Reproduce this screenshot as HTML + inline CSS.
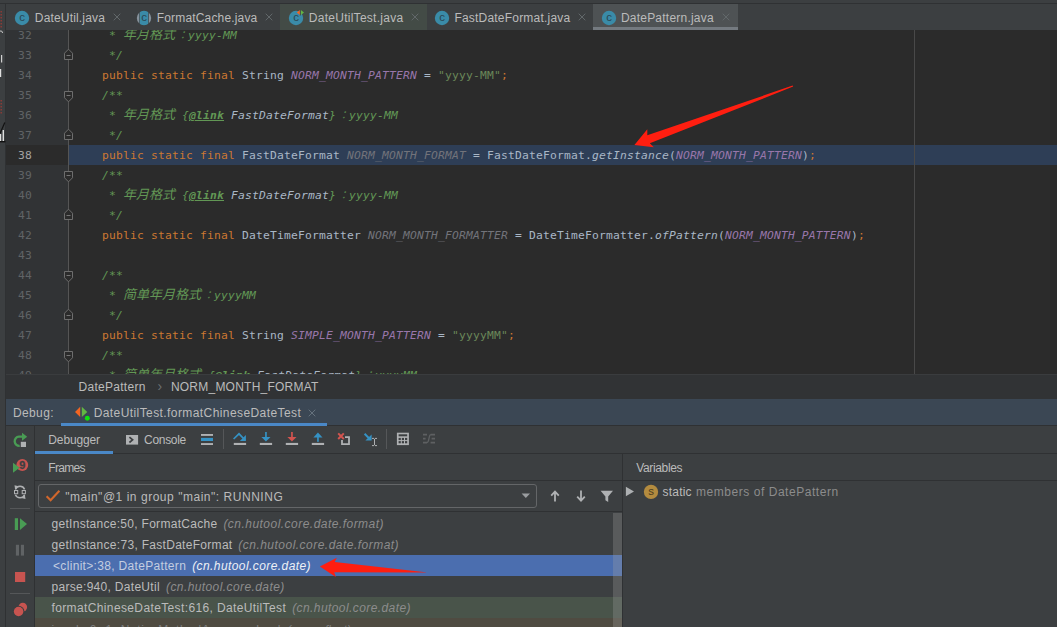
<!DOCTYPE html>
<html lang="zh"><head><meta charset="utf-8"><title>DatePattern.java - Debug</title>
<style>
*{box-sizing:border-box;margin:0;padding:0}
html,body{width:1057px;height:627px;overflow:hidden;background:#3c3f41}
body{position:relative;font-family:"Liberation Sans","Noto Sans CJK SC",sans-serif;font-size:12px;color:#bbbbbb}
.abs{position:absolute;display:block}
.ui{position:absolute;white-space:pre;line-height:16px;height:16px}
#topstrip{position:absolute;left:0;top:0;width:1057px;height:4px;background:#3c3f41;border-bottom:1px solid #2f3133}
#leftstrip{position:absolute;left:0;top:4px;width:6px;height:623px;background:#3c3f41;border-right:1px solid #2f3133}
#tabbar{position:absolute;left:6px;top:4px;width:1051px;height:26px;background:#3c3f41}
.tab{position:absolute;top:4px;height:26px}
.ttest{background:#434b46}
.tsel{background:#4e5254;border-bottom:3px solid #747a80}
.tt{position:absolute;top:10px;height:16px;line-height:16px;white-space:pre;color:#bbbbbb}
#editor{position:absolute;left:6px;top:30px;width:1051px;height:344px;background:#2b2b2b;overflow:hidden}
#gutter{position:absolute;left:0;top:0;width:62px;height:344px;background:#313335}
#foldline{position:absolute;left:62px;top:0;width:1px;height:344px;background:#555555}
#margin{position:absolute;left:908px;top:0;width:1px;height:344px;background:#494949}
#curg{position:absolute;left:0;top:115px;width:62px;height:20px;background:#2b2b2b}
#curl{position:absolute;left:63px;top:115px;width:988px;height:20px;background:#2e3e56}
.ln{position:absolute;left:0;width:26px;height:20px;line-height:20px;text-align:right;color:#606366;font-family:"DejaVu Sans Mono","Liberation Mono",monospace;font-size:11.3px;letter-spacing:0.197px;margin-top:1px}
.ln.cur{color:#a4a3a3}
.cl{position:absolute;left:96px;height:20px;line-height:20px;white-space:pre;color:#a9b7c6;font-family:"DejaVu Sans Mono","Liberation Mono","Noto Sans CJK SC",monospace;font-size:11.3px;letter-spacing:0.197px;margin-top:1px}
.k{color:#cc7832} .f{color:#9876aa;font-style:italic} .u{color:#72737a;font-style:italic} .s{color:#6a8759}
.d{color:#629755;font-style:italic} .t{font-weight:bold;text-decoration:underline} .dl{color:#a9b7c6} .i{font-style:italic}
.cj{font-family:"Noto Sans CJK SC",sans-serif;font-size:13px;letter-spacing:0;line-height:0}
.co{font-family:"Noto Sans CJK JP","Noto Sans CJK SC",sans-serif;font-size:11px;letter-spacing:0;display:inline-block;width:13px;text-align:center;position:relative;left:1px;opacity:.8;line-height:0}
.fold{position:absolute;left:57px}
#crumbs{position:absolute;left:6px;top:374px;width:1051px;height:25px;background:#313335;border-top:1px solid #3a3c3e}
#dbghead{position:absolute;left:6px;top:399px;width:1051px;height:27px;background:#3b4754;border-bottom:1px solid #2f3133}
#dbgul{position:absolute;left:61px;top:423px;width:266px;height:3px;background:#4a88c7}
#ltool{position:absolute;left:6px;top:426px;width:29px;height:201px;background:#3c3f41;border-right:1px solid #2f3133}
#tbar{position:absolute;left:35px;top:426px;width:1022px;height:28px;background:#3c3f41;border-bottom:1px solid #2f3133}
#dbul{position:absolute;left:35px;top:451px;width:78px;height:3px;background:#4a88c7}
.vsep{position:absolute;width:1px;background:#555759}
.hsep{position:absolute;height:1px;background:#555759}
.hl{position:absolute;height:1px;background:#2f3133}
#split{position:absolute;left:622px;top:454px;width:1px;height:173px;background:#2f3133}
#combo{position:absolute;left:38px;top:484px;width:499px;height:24px;border:1px solid #646668;border-radius:3px}
.row{position:absolute;left:35px;width:587px;height:21px}
#sb{position:absolute;left:613px;top:513px;width:9px;height:114px;background:rgba(166,166,166,0.28)}
</style></head><body>
<div id="topstrip"></div>
<div id="leftstrip"></div>
<div id="tabbar"></div>
<svg class="abs" style="left:0;top:0" width="6" height="160" viewBox="0 0 6 160">
<path d="M1.2 11 V28" stroke="#8f3b36" stroke-width="1.4" stroke-dasharray="1.6 1.4" fill="none"/>
<path d="M0 31 Q2.4 30.4 2.6 33" stroke="#c8c8c8" stroke-width="1" fill="none"/>
<rect x="1" y="55" width="1.2" height="7.5" fill="#d0d0d0"/><rect x="0" y="69" width="1.2" height="8" fill="#e0e0e0"/>
<path d="M1.2 100 V114" stroke="#8f3b36" stroke-width="1.4" stroke-dasharray="1.6 1.4" fill="none"/>
<path d="M0 133.5 L4.8 122.5" stroke="#111" stroke-width="1.2" fill="none"/><rect x="0" y="134" width="1.2" height="7" fill="#ddd"/><rect x="2.6" y="130" width="1.4" height="11" fill="#ddd"/><rect x="0" y="141" width="5.4" height="1.4" fill="#111"/>
</svg>
<div class="tab" style="left:6px;width:123px"></div><svg class="abs" style="left:14px;top:10px" width="16" height="16" viewBox="0 0 16 16"><circle cx="8" cy="8" r="7.2" fill="#3a8ba8"/><text x="8" y="11.1" font-family="Liberation Sans, sans-serif" font-size="11.5" text-anchor="middle" fill="#2a4552">c</text></svg><div class="tt" style="left:34.8px;letter-spacing:0.167px">DateUtil.java</div><svg class="abs" style="left:113.4px;top:13px" width="8" height="8" viewBox="0 0 8 8"><path d="M0.7 0.7 L7.3 7.3 M7.3 0.7 L0.7 7.3" stroke="#62686a" stroke-width="1" fill="none"/></svg><div class="tab" style="left:129px;width:151px"></div><svg class="abs" style="left:135.9px;top:10px" width="16" height="16" viewBox="0 0 16 16"><defs><clipPath id="ca1"><rect x="3.75" y="0" width="8.5" height="16"/></clipPath><clipPath id="cb1"><rect x="0" y="0" width="3.2" height="16"/><rect x="12.85" y="0" width="3.2" height="16"/></clipPath></defs><circle cx="8" cy="8" r="7.2" fill="#3a8ba8" clip-path="url(#ca1)"/><circle cx="8" cy="8" r="7.2" fill="#86929c" clip-path="url(#cb1)"/><text x="8" y="11.1" font-family="Liberation Sans, sans-serif" font-size="11.5" text-anchor="middle" fill="#2a4552">c</text></svg><div class="tt" style="left:156.8px;letter-spacing:0.160px">FormatCache.java</div><svg class="abs" style="left:265px;top:13px" width="8" height="8" viewBox="0 0 8 8"><path d="M0.7 0.7 L7.3 7.3 M7.3 0.7 L0.7 7.3" stroke="#62686a" stroke-width="1" fill="none"/></svg><div class="tab ttest" style="left:280px;width:147px"></div><svg class="abs" style="left:288.1px;top:10px" width="16" height="16" viewBox="0 0 16 16"><circle cx="8" cy="8" r="7.2" fill="#3a8ba8"/><text x="8" y="11.1" font-family="Liberation Sans, sans-serif" font-size="11.5" text-anchor="middle" fill="#2a4552">c</text><rect x="11.7" y="0" width="1.3" height="5.4" fill="#434b46"/><path d="M8.8 2.45 L11.8 0 V4.9 Z" fill="#f26522"/><path d="M12.9 0 L16 2.45 L12.9 4.9 Z" fill="#62b543"/></svg><div class="tt" style="left:308.8px;letter-spacing:0.268px">DateUtilTest.java</div><svg class="abs" style="left:411.3px;top:13px" width="8" height="8" viewBox="0 0 8 8"><path d="M0.7 0.7 L7.3 7.3 M7.3 0.7 L0.7 7.3" stroke="#62686a" stroke-width="1" fill="none"/></svg><div class="tab" style="left:427px;width:166px"></div><svg class="abs" style="left:434px;top:10px" width="16" height="16" viewBox="0 0 16 16"><circle cx="8" cy="8" r="7.2" fill="#3a8ba8"/><text x="8" y="11.1" font-family="Liberation Sans, sans-serif" font-size="11.5" text-anchor="middle" fill="#2a4552">c</text></svg><div class="tt" style="left:454.4px;letter-spacing:0.208px">FastDateFormat.java</div><svg class="abs" style="left:577.8px;top:13px" width="8" height="8" viewBox="0 0 8 8"><path d="M0.7 0.7 L7.3 7.3 M7.3 0.7 L0.7 7.3" stroke="#62686a" stroke-width="1" fill="none"/></svg><div class="tab tsel" style="left:593px;width:145px"></div><svg class="abs" style="left:600.6px;top:10px" width="16" height="16" viewBox="0 0 16 16"><circle cx="8" cy="8" r="7.2" fill="#3a8ba8"/><text x="8" y="11.1" font-family="Liberation Sans, sans-serif" font-size="11.5" text-anchor="middle" fill="#2a4552">c</text></svg><div class="tt" style="left:620.9px;letter-spacing:0.226px">DatePattern.java</div><svg class="abs" style="left:721.8px;top:13px" width="8" height="8" viewBox="0 0 8 8"><path d="M0.7 0.7 L7.3 7.3 M7.3 0.7 L0.7 7.3" stroke="#62686a" stroke-width="1" fill="none"/></svg>
<div id="editor">
 <div id="gutter"></div><div id="curg"></div><div id="curl"></div><div id="foldline"></div><div id="margin"></div>
 <div class="ln" style="top:-5px">32</div><div class="cl" style="top:-5px"><span class="d"> * <span class="cj">年月格式</span><span class="co">：</span>yyyy-MM</span></div><div class="ln" style="top:15px">33</div><div class="cl" style="top:15px"><span class="d"> */</span></div><div class="ln" style="top:35px">34</div><div class="cl" style="top:35px"><span class="k">public static final </span>String <span class="f">NORM_MONTH_PATTERN</span> = <span class="s">"yyyy-MM"</span><span class="k">;</span></div><div class="ln" style="top:55px">35</div><div class="cl" style="top:55px"><span class="d">/**</span></div><div class="ln" style="top:75px">36</div><div class="cl" style="top:75px"><span class="d"> * <span class="cj">年月格式</span> {<span class="t">@link</span> <span class="dl">FastDateFormat</span>}<span class="co">：</span>yyyy-MM</span></div><div class="ln" style="top:95px">37</div><div class="cl" style="top:95px"><span class="d"> */</span></div><div class="ln cur" style="top:115px">38</div><div class="cl" style="top:115px"><span class="k">public static final </span>FastDateFormat <span class="u">NORM_MONTH_FORMAT</span> = FastDateFormat.<span class="i">getInstance</span>(<span class="f">NORM_MONTH_PATTERN</span>)<span class="k">;</span></div><div class="ln" style="top:135px">39</div><div class="cl" style="top:135px"><span class="d">/**</span></div><div class="ln" style="top:155px">40</div><div class="cl" style="top:155px"><span class="d"> * <span class="cj">年月格式</span> {<span class="t">@link</span> <span class="dl">FastDateFormat</span>}<span class="co">：</span>yyyy-MM</span></div><div class="ln" style="top:175px">41</div><div class="cl" style="top:175px"><span class="d"> */</span></div><div class="ln" style="top:195px">42</div><div class="cl" style="top:195px"><span class="k">public static final </span>DateTimeFormatter <span class="u">NORM_MONTH_FORMATTER</span> = DateTimeFormatter.<span class="i">ofPattern</span>(<span class="f">NORM_MONTH_PATTERN</span>)<span class="k">;</span></div><div class="ln" style="top:215px">43</div><div class="cl" style="top:215px"></div><div class="ln" style="top:235px">44</div><div class="cl" style="top:235px"><span class="d">/**</span></div><div class="ln" style="top:255px">45</div><div class="cl" style="top:255px"><span class="d"> * <span class="cj">简单年月格式</span><span class="co">：</span>yyyyMM</span></div><div class="ln" style="top:275px">46</div><div class="cl" style="top:275px"><span class="d"> */</span></div><div class="ln" style="top:295px">47</div><div class="cl" style="top:295px"><span class="k">public static final </span>String <span class="f">SIMPLE_MONTH_PATTERN</span> = <span class="s">"yyyyMM"</span><span class="k">;</span></div><div class="ln" style="top:315px">48</div><div class="cl" style="top:315px"><span class="d">/**</span></div><div class="ln" style="top:335px">49</div><div class="cl" style="top:335px"><span class="d"> * <span class="cj">简单年月格式</span> {<span class="t">@link</span> <span class="dl">FastDateFormat</span>}<span class="co">：</span>yyyyMM</span></div>
 <svg class="fold" style="top:18px" width="11" height="13" viewBox="0 0 11 13"><path d="M1.5 11.5 V5.2 L5.5 1.2 L9.5 5.2 V11.5 Z" fill="#2b2b2b" stroke="#6e6e6e"/><path d="M3.5 7.5 H7.5" stroke="#747474"/></svg><svg class="fold" style="top:98px" width="11" height="13" viewBox="0 0 11 13"><path d="M1.5 11.5 V5.2 L5.5 1.2 L9.5 5.2 V11.5 Z" fill="#2b2b2b" stroke="#6e6e6e"/><path d="M3.5 7.5 H7.5" stroke="#747474"/></svg><svg class="fold" style="top:178px" width="11" height="13" viewBox="0 0 11 13"><path d="M1.5 11.5 V5.2 L5.5 1.2 L9.5 5.2 V11.5 Z" fill="#2b2b2b" stroke="#6e6e6e"/><path d="M3.5 7.5 H7.5" stroke="#747474"/></svg><svg class="fold" style="top:278px" width="11" height="13" viewBox="0 0 11 13"><path d="M1.5 11.5 V5.2 L5.5 1.2 L9.5 5.2 V11.5 Z" fill="#2b2b2b" stroke="#6e6e6e"/><path d="M3.5 7.5 H7.5" stroke="#747474"/></svg><svg class="fold" style="top:60px" width="11" height="13" viewBox="0 0 11 13"><path d="M1.5 1.5 V7.8 L5.5 11.8 L9.5 7.8 V1.5 Z" fill="#2b2b2b" stroke="#6e6e6e"/><path d="M3.5 5.5 H7.5" stroke="#747474"/></svg><svg class="fold" style="top:140px" width="11" height="13" viewBox="0 0 11 13"><path d="M1.5 1.5 V7.8 L5.5 11.8 L9.5 7.8 V1.5 Z" fill="#2b2b2b" stroke="#6e6e6e"/><path d="M3.5 5.5 H7.5" stroke="#747474"/></svg><svg class="fold" style="top:240px" width="11" height="13" viewBox="0 0 11 13"><path d="M1.5 1.5 V7.8 L5.5 11.8 L9.5 7.8 V1.5 Z" fill="#2b2b2b" stroke="#6e6e6e"/><path d="M3.5 5.5 H7.5" stroke="#747474"/></svg><svg class="fold" style="top:320px" width="11" height="13" viewBox="0 0 11 13"><path d="M1.5 1.5 V7.8 L5.5 11.8 L9.5 7.8 V1.5 Z" fill="#2b2b2b" stroke="#6e6e6e"/><path d="M3.5 5.5 H7.5" stroke="#747474"/></svg>
</div>
<div id="crumbs"></div>
<div class="ui" style="left:78.5px;top:378.5px;letter-spacing:0.287px;">DatePattern</div>
<div class="ui" style="left:157.5px;top:377.5px;color:#6c7072;font-size:14px">›</div>
<div class="ui" style="left:170.9px;top:378.5px;letter-spacing:0.231px;">NORM_MONTH_FORMAT</div>
<div id="dbghead"></div>
<div class="ui" style="left:12.9px;top:404.5px;letter-spacing:0.399px;">Debug:</div>
<svg class="abs" style="left:75px;top:406px" width="16" height="16" viewBox="0 0 16 16"><path d="M5.2 0.8 V11 L0 5.9 Z" fill="#f26522"/><path d="M6.8 0.8 V11 L12.3 5.9 Z" fill="#62b543"/><circle cx="12.3" cy="12.3" r="3.1" fill="#3b4754"/><circle cx="12.3" cy="12.3" r="2.45" fill="#0ee10e"/></svg>
<div class="ui" style="left:93.7px;top:404.5px;letter-spacing:0.414px;">DateUtilTest.formatChineseDateTest</div>
<svg class="abs" style="left:308px;top:409px" width="8" height="8" viewBox="0 0 8 8"><path d="M0.7 0.7 L7.3 7.3 M7.3 0.7 L0.7 7.3" stroke="#66727d" stroke-width="1" fill="none"/></svg>
<div id="dbgul"></div>
<div id="ltool"></div>
<div id="tbar"></div>
<div id="dbul"></div>
<div class="ui" style="left:48.3px;top:432px;letter-spacing:-0.127px;">Debugger</div>
<div class="ui" style="left:144px;top:432px;letter-spacing:-0.290px;">Console</div>
<div class="hl" style="left:35px;top:480px;width:1022px"></div>
<div class="hl" style="left:35px;top:511px;width:587px"></div>
<div id="combo"></div>
<div class="ui" style="left:51.5px;top:516.0px;letter-spacing:0.289px;color:#bbbbbb">getInstance:50, FormatCache</div><div class="ui" style="left:223.4px;top:516.0px;font-style:italic;letter-spacing:0.471px;color:#8c8c8c">(cn.hutool.core.date.format)</div><div class="ui" style="left:51.5px;top:537.0px;letter-spacing:0.297px;color:#bbbbbb">getInstance:73, FastDateFormat</div><div class="ui" style="left:238.3px;top:537.0px;font-style:italic;letter-spacing:0.478px;color:#8c8c8c">(cn.hutool.core.date.format)</div><div class="row" style="top:555px;background:#4b6eaf"></div><div class="ui" style="left:53.0px;top:558.0px;letter-spacing:0.324px;color:#c3cde0">&lt;clinit&gt;:38, DatePattern</div><div class="ui" style="left:192.2px;top:558.0px;font-style:italic;letter-spacing:0.416px;color:#eef1f6">(cn.hutool.core.date)</div><div class="ui" style="left:51.5px;top:579.0px;letter-spacing:0.298px;color:#bbbbbb">parse:940, DateUtil</div><div class="ui" style="left:166.0px;top:579.0px;font-style:italic;letter-spacing:0.407px;color:#8c8c8c">(cn.hutool.core.date)</div><div class="row" style="top:597px;background:#49544a"></div><div class="ui" style="left:51.5px;top:600.0px;letter-spacing:0.372px;color:#bbbbbb">formatChineseDateTest:616, DateUtilTest</div><div class="ui" style="left:292.2px;top:600.0px;font-style:italic;letter-spacing:0.411px;color:#8c8c8c">(cn.hutool.core.date)</div><div class="row" style="top:618px;background:#4f4b41"></div><div class="ui" style="left:51.5px;top:622.0px;letter-spacing:0.595px;color:#7c7c7c">invoke0:-1, NativeMethodAccessorImpl</div><div class="ui" style="left:287.0px;top:622.0px;font-style:italic;letter-spacing:0.049px;color:#7c7c7c">(sun.reflect)</div>
<div id="sb"></div>
<div class="ui" style="left:48.3px;top:459.8px;letter-spacing:-0.679px;">Frames</div>
<div class="ui" style="left:65.2px;top:489px;letter-spacing:0.530px;">"main"@1 in group "main": RUNNING</div>
<div id="split"></div>
<div class="ui" style="left:636.2px;top:459.8px;letter-spacing:-0.349px;">Variables</div>
<div class="ui" style="left:662.6px;top:484px;letter-spacing:0.197px;">static</div>
<div class="ui" style="left:696px;top:484px;letter-spacing:0.544px;color:#8c8c8c">members of DatePattern</div>
<svg class="abs" style="left:12px;top:432px" width="16" height="16" viewBox="0 0 16 16"><path d="M7.7 13.9 A4.6 4.6 0 0 1 6.9 4.7 L10.4 4.7" fill="none" stroke="#499c54" stroke-width="2.3"/><path d="M10 0.8 L15.2 4.8 L10 8.8 Z" fill="#499c54"/><rect x="8.8" y="9.8" width="5.2" height="5.2" fill="#afb1b3"/></svg><svg class="abs" style="left:12px;top:458px" width="18" height="16" viewBox="0 0 18 16"><circle cx="10.3" cy="7" r="5.9" fill="#c75450"/><path d="M1 4.8 L7.7 9.8 L1 14.8 Z" fill="#499c54"/><text x="10.4" y="11" font-family="Liberation Sans, sans-serif" font-weight="bold" font-size="11" text-anchor="middle" fill="#3c3f41" stroke="#3c3f41" stroke-width="0.3">9</text></svg><svg class="abs" style="left:12px;top:484px" width="16" height="16" viewBox="0 0 16 16"><path d="M3.4 5.4 A5 5 0 0 1 12.6 5.4" fill="none" stroke="#afb1b3" stroke-width="1.5"/><path d="M2.5 1.2 L6.7 2.3 L3.2 5.7 Z" fill="#afb1b3"/><path d="M12.6 10.8 A5 5 0 0 1 3.4 10.8" fill="none" stroke="#afb1b3" stroke-width="1.5"/><path d="M13.5 15 L9.3 13.9 L12.8 10.5 Z" fill="#afb1b3"/><rect x="2.5" y="6.5" width="3.2" height="3.2" fill="none" stroke="#afb1b3" stroke-width="1"/><rect x="10.2" y="6.5" width="3.2" height="3.2" fill="none" stroke="#afb1b3" stroke-width="1"/></svg><div class="hsep" style="left:10px;top:508px;width:20px"></div><svg class="abs" style="left:12px;top:516px" width="16" height="16" viewBox="0 0 16 16"><rect x="2.8" y="2.2" width="3.2" height="11.8" fill="#499c54"/><path d="M8 2.2 L15 8.1 L8 14 Z" fill="#499c54"/></svg><svg class="abs" style="left:12px;top:542px" width="16" height="16" viewBox="0 0 16 16"><rect x="3.9" y="2.8" width="3.1" height="10.8" fill="#606365"/><rect x="8.9" y="2.8" width="3.1" height="10.8" fill="#606365"/></svg><svg class="abs" style="left:12px;top:569px" width="16" height="16" viewBox="0 0 16 16"><rect x="3" y="3" width="10.2" height="10" fill="#c75450"/></svg><div class="hsep" style="left:10px;top:593px;width:20px"></div><svg class="abs" style="left:12px;top:597px" width="18" height="22" viewBox="0 0 18 22"><circle cx="10.8" cy="10.1" r="4.3" fill="#c75450"/><circle cx="6.6" cy="14.5" r="5.8" fill="#3c3f41"/><circle cx="6.6" cy="14.5" r="4.75" fill="#c75450"/></svg><svg class="abs" style="left:125.8px;top:435px" width="13" height="10" viewBox="0 0 13 10"><rect x="0" y="0" width="12.1" height="9.6" fill="#afb1b3"/><path d="M3.4 2.1 L6.6 4.8 L3.4 7.5" fill="none" stroke="#3c3f41" stroke-width="1.7"/></svg><svg class="abs" style="left:200px;top:432px" width="14" height="15" viewBox="0 0 14 15"><rect x="1" y="2" width="12" height="1.9" fill="#afb1b3"/><rect x="1" y="5.9" width="12" height="3.1" fill="#3592c4"/><rect x="1" y="11.1" width="12" height="1.9" fill="#afb1b3"/></svg><div class="vsep" style="left:223px;top:429px;height:20px"></div><svg class="abs" style="left:232px;top:431px" width="16" height="16" viewBox="0 0 16 16"><path d="M1.6 8 L7 2.8 L13 9" fill="none" stroke="#3592c4" stroke-width="1.7"/><path d="M13.9 4 V10 H7.9 Z" fill="#3592c4"/><rect x="1.8" y="11.9" width="12.3" height="2.1" fill="#afb1b3"/></svg><svg class="abs" style="left:258px;top:431px" width="16" height="16" viewBox="0 0 16 16"><rect x="7.1" y="1" width="1.7" height="6" fill="#3592c4"/><path d="M3.4 6 H12.5 L7.95 10.6 Z" fill="#3592c4"/><rect x="1.8" y="11.9" width="12.3" height="2.1" fill="#afb1b3"/></svg><svg class="abs" style="left:284px;top:431px" width="16" height="16" viewBox="0 0 16 16"><rect x="7.1" y="1" width="1.7" height="6" fill="#d2544f"/><path d="M3.4 6 H12.5 L7.95 10.6 Z" fill="#d2544f"/><rect x="1.8" y="11.9" width="12.3" height="2.1" fill="#afb1b3"/></svg><svg class="abs" style="left:310px;top:431px" width="16" height="16" viewBox="0 0 16 16"><rect x="7.1" y="5" width="1.7" height="5.8" fill="#3592c4"/><path d="M3.4 6.4 H12.5 L7.95 1.4 Z" fill="#3592c4"/><rect x="1.8" y="11.9" width="12.3" height="2.1" fill="#afb1b3"/></svg><svg class="abs" style="left:336px;top:431px" width="16" height="16" viewBox="0 0 16 16"><path d="M6 6.2 H13 V13.2 H6 Z" fill="none" stroke="#afb1b3" stroke-width="1.8"/><rect x="0" y="0" width="9" height="9" fill="#3c3f41"/><path d="M2.2 2.4 L7.8 8 M7.8 2.4 L2.2 8" stroke="#d2544f" stroke-width="2" fill="none"/></svg><svg class="abs" style="left:362px;top:431px" width="18" height="16" viewBox="0 0 18 16"><path d="M2.6 2.8 L8 8.2" stroke="#3592c4" stroke-width="2" fill="none"/><path d="M9.6 3.4 V9.6 H3.4 Z" fill="#3592c4"/><path d="M10 7.4 H12 M13 7.4 H15 M10 14.6 H12 M13 14.6 H15 M12.5 7.8 V14.2" stroke="#afb1b3" stroke-width="1" fill="none"/></svg><div class="vsep" style="left:386px;top:429px;height:20px"></div><svg class="abs" style="left:396px;top:432px" width="14" height="14" viewBox="0 0 14 14"><rect x="0.9" y="0.7" width="12" height="12.4" fill="#afb1b3"/><rect x="2.6" y="2.3" width="8.6" height="2" fill="#3c3f41"/><rect x="2.6" y="5.9" width="2.2" height="2.2" fill="#3c3f41"/><rect x="5.800000000000001" y="5.9" width="2.2" height="2.2" fill="#3c3f41"/><rect x="9.0" y="5.9" width="2.2" height="2.2" fill="#3c3f41"/><rect x="2.6" y="9.100000000000001" width="2.2" height="2.2" fill="#3c3f41"/><rect x="5.800000000000001" y="9.100000000000001" width="2.2" height="2.2" fill="#3c3f41"/><rect x="9.0" y="9.100000000000001" width="2.2" height="2.2" fill="#3c3f41"/></svg><svg class="abs" style="left:422px;top:432px" width="14" height="14" viewBox="0 0 14 14"><path d="M1 2.6 H5 M1 6.6 H3.6 M1 10.6 H5 M8.6 2.6 H13 M9.6 6.6 H13 M8.6 10.6 H13" stroke="#5e6062" stroke-width="1.9" fill="none"/><path d="M5 10.6 C7.5 10.6 6.5 2.6 8.8 2.6" stroke="#5e6062" stroke-width="1.3" fill="none"/></svg><svg class="abs" style="left:45px;top:489px" width="16" height="13" viewBox="0 0 16 13"><path d="M1.6 7.2 L5.6 11.2 L14.4 1.8" fill="none" stroke="#d2672c" stroke-width="2.1"/></svg><svg class="abs" style="left:521px;top:493px" width="10" height="6" viewBox="0 0 10 6"><path d="M0.6 0.6 H9 L4.8 5 Z" fill="#9a9da0"/></svg><svg class="abs" style="left:549px;top:490px" width="12" height="12" viewBox="0 0 12 12"><path d="M6 11.6 V1.8 M2.2 5.6 L6 1.6 L9.8 5.6" fill="none" stroke="#afb1b3" stroke-width="1.8"/></svg><svg class="abs" style="left:575px;top:490px" width="12" height="12" viewBox="0 0 12 12"><path d="M6 0.6 V10.4 M2.2 6.6 L6 10.6 L9.8 6.6" fill="none" stroke="#afb1b3" stroke-width="1.8"/></svg><svg class="abs" style="left:600px;top:490px" width="14" height="13" viewBox="0 0 14 13"><path d="M0.6 0.8 H13 L8.2 6.4 V12 L5.4 10.2 V6.4 Z" fill="#afb1b3"/></svg><svg class="abs" style="left:625px;top:486px" width="10" height="11" viewBox="0 0 10 11"><path d="M0.9 0.7 L9 5.45 L0.9 10.2 Z" fill="#adb0b2"/></svg><svg class="abs" style="left:643px;top:484px" width="16" height="16" viewBox="0 0 16 16"><circle cx="8" cy="7.9" r="7.15" fill="#b38b3f"/><text x="8" y="11.2" font-family="Liberation Sans, sans-serif" font-size="11.5" text-anchor="middle" fill="#4d3b1d">s</text></svg>
<svg class="abs" style="left:0;top:0;pointer-events:none" width="1057" height="627" viewBox="0 0 1057 627">
 <path d="M793.2 86.6 L792.6 85.6 L647.3 135.3 L647.3 129.3 L634.4 144.9 L653.8 147.3 L649.8 143.2 Z" fill="#ff1e10"/>
 <path d="M427.8 572.4 L334.7 562 L336.8 557.8 L319.9 566.5 L335.8 577 L334.2 572.2 Z" fill="#ff1e10"/>
</svg>
</body></html>
